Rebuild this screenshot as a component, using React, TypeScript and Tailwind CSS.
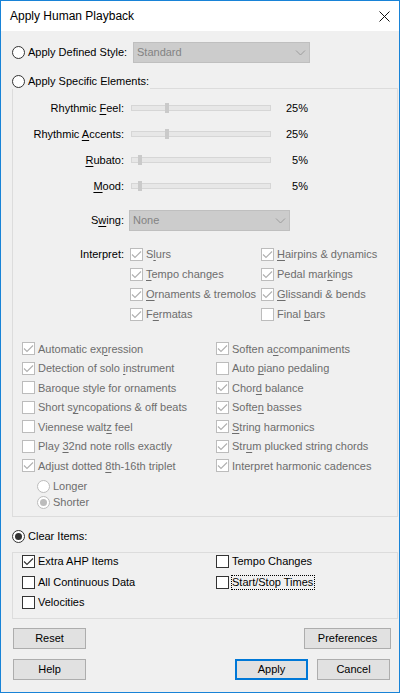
import type { ReactNode } from 'react';

// "_" marks the mnemonic letter, e.g. "Rhythmic _Feel:"
function Mn({ text }: { text: string }) {
  const i = text.indexOf('_');
  if (i < 0) return <>{text}</>;
  return (
    <>
      {text.slice(0, i)}
      <span className="underline underline-offset-[2px]">{text[i + 1]}</span>
      {text.slice(i + 2)}
    </>
  );
}

function CheckBox({ checked, disabled }: { checked?: boolean; disabled?: boolean }) {
  return (
    <div
      className={`w-[13px] h-[13px] shrink-0 bg-white border flex items-center justify-center ${
        disabled ? 'border-[#bcbcbc]' : 'border-[#333333]'
      }`}
    >
      {checked && (
        <svg width="11" height="11" viewBox="0 0 11 11" fill="none">
          <path
            d="M1 5.5 L4 8.5 L10 2.5"
            stroke={disabled ? '#b0b0b0' : '#333333'}
            strokeWidth="1.1"
          />
        </svg>
      )}
    </div>
  );
}

function Radio({ selected, disabled }: { selected?: boolean; disabled?: boolean }) {
  return (
    <div
      className={`w-[13px] h-[13px] shrink-0 rounded-full bg-white border flex items-center justify-center ${
        disabled ? 'border-[#bcbcbc]' : 'border-[#333333]'
      }`}
    >
      {selected && (
        <div className={`w-[7px] h-[7px] rounded-full ${disabled ? 'bg-[#bcbcbc]' : 'bg-[#333333]'}`} />
      )}
    </div>
  );
}

function CheckItem({
  label,
  checked,
  disabled,
  focus,
  h = 'h-[19.5px]',
}: {
  label: string;
  checked?: boolean;
  disabled?: boolean;
  focus?: boolean;
  h?: string;
}) {
  return (
    <div className={`flex items-center ${h} ${disabled ? 'text-[#6d6d6d]' : 'text-black'}`}>
      <CheckBox checked={checked} disabled={disabled} />
      {focus ? (
        <span className="ml-[2px] border border-dotted border-black leading-[13px] pr-[1px]">
          <Mn text={label} />
        </span>
      ) : (
        <span className="ml-[3px] whitespace-nowrap">
          <Mn text={label} />
        </span>
      )}
    </div>
  );
}

function Combo({ value, className }: { value: string; className: string }) {
  return (
    <div
      className={`h-[21px] bg-[#cccccc] border border-[#bfbfbf] flex items-center justify-between pl-[3px] pr-[3px] text-[#838383] ${className}`}
    >
      <span>{value}</span>
      <svg width="11" height="6" viewBox="0 0 11 6" fill="none">
        <path d="M1 0.5 L5.5 5 L10 0.5" stroke="#9c9c9c" strokeWidth="1" />
      </svg>
    </div>
  );
}

function SliderRow({ label, value, offset }: { label: string; value: string; offset: string }) {
  return (
    <div className="flex items-center h-[26px]">
      <div className="w-[111px] text-right whitespace-nowrap">
        <Mn text={label} />
      </div>
      <div className="ml-[7px] w-[140px] h-[6px] bg-[#e7e7e7] border border-[#d6d6d6] flex items-center">
        <div className={`${offset} w-[4px] h-[10px] bg-[#cacaca] shrink-0`} />
      </div>
      <div className="w-[37px] text-right">{value}</div>
    </div>
  );
}

function Button({ children, className, focused }: { children: ReactNode; className: string; focused?: boolean }) {
  return (
    <div
      className={`h-[21px] bg-[#e1e1e1] flex items-center justify-center ${
        focused ? 'border-2 border-[#0078d7]' : 'border border-[#adadad]'
      } ${className}`}
    >
      {children}
    </div>
  );
}

const lower: [string, boolean, string, boolean][] = [
  ['Automatic ex_pression', true, 'Soften a_ccompaniments', true],
  ['Detection of solo _instrument', true, 'Auto _piano pedaling', false],
  ['Baroque style for ornaments', false, 'Chor_d balance', true],
  ['Short s_yncopations & off beats', false, 'Softe_n basses', true],
  ['Viennese walt_z feel', false, '_String harmonics', true],
  ['Play _32nd note rolls exactly', false, 'Str_um plucked string chords', true],
  ['Adjust dotted _8th-16th triplet', true, 'Interpret harmonic cadences', true],
];

export default function App() {
  return (
    <div className="w-[400px] h-[693px] border border-[#1883d7] bg-[#f0f0f0] flex flex-col overflow-hidden text-[11px] text-black font-['Liberation_Sans',Arial,sans-serif]">
      {/* title bar */}
      <div className="h-[30px] shrink-0 bg-white flex items-center justify-between pl-[9px] pr-[9px]">
        <span className="text-[12px]">Apply Human Playback</span>
        <svg width="11" height="11" viewBox="0 0 11 11" fill="none">
          <path d="M0.5 0.5 L10.5 10.5 M10.5 0.5 L0.5 10.5" stroke="#111111" strokeWidth="1" />
        </svg>
      </div>

      <div className="flex-1 pl-[11px] pr-[1px] pt-[11px]">
        {/* defined style */}
        <div className="flex items-center h-[21px]">
          <div className="w-[121px] flex items-center">
            <Radio />
            <span className="ml-[3px] whitespace-nowrap">Apply Defined Style:</span>
          </div>
          <Combo value="Standard" className="w-[177px]" />
        </div>

        {/* specific elements group */}
        <div className="flex h-[16px] mt-[10px]">
          <div className="w-[138px] flex items-center">
            <Radio />
            <span className="ml-[3px] whitespace-nowrap">Apply Specific Elements:</span>
          </div>
          <div className="flex-1 flex flex-col justify-end">
            <div className="h-px bg-[#dcdcdc]" />
          </div>
        </div>
        <div className="border-x border-b border-[#dcdcdc] pt-[6px] pb-[6px]">
          <SliderRow label="Rhythmic _Feel:" value="25%" offset="ml-[33px]" />
          <SliderRow label="Rhythmic _Accents:" value="25%" offset="ml-[33px]" />
          <SliderRow label="_Rubato:" value="5%" offset="ml-[6px]" />
          <SliderRow label="_Mood:" value="5%" offset="ml-[6px]" />

          <div className="flex items-center h-[21px] mt-[11px]">
            <div className="w-[111px] text-right">
              <Mn text="S_wing:" />
            </div>
            <Combo value="None" className="ml-[5px] w-[161px]" />
          </div>

          <div className="flex mt-[13px]">
            <div className="w-[111px] text-right h-[20px] flex items-center justify-end">Interpret:</div>
            <div className="ml-[6px] grid grid-cols-[131px_auto]">
              <CheckItem label="S_lurs" checked disabled h="h-[20px]" />
              <CheckItem label="_Hairpins & dynamics" checked disabled h="h-[20px]" />
              <CheckItem label="_Tempo changes" checked disabled h="h-[20px]" />
              <CheckItem label="Pedal mar_kings" checked disabled h="h-[20px]" />
              <CheckItem label="_Ornaments & tremolos" checked disabled h="h-[20px]" />
              <CheckItem label="_Glissandi & bends" checked disabled h="h-[20px]" />
              <CheckItem label="F_ermatas" checked disabled h="h-[20px]" />
              <CheckItem label="Final _bars" disabled h="h-[20px]" />
            </div>
          </div>

          <div className="mt-[15px] pl-[9px] grid grid-cols-[194px_auto]">
            {lower.map(([l, lc, r, rc]) => (
              <div key={l} className="contents">
                <CheckItem label={l} checked={lc} disabled />
                <CheckItem label={r} checked={rc} disabled />
              </div>
            ))}
          </div>

          <div className="mt-[2.5px] pl-[24px] text-[#6d6d6d]">
            <div className="flex items-center h-[16px]">
              <Radio disabled />
              <span className="ml-[3px]">Longer</span>
            </div>
            <div className="flex items-center h-[16px]">
              <Radio selected disabled />
              <span className="ml-[3px]">Shorter</span>
            </div>
          </div>
        </div>

        {/* clear items */}
        <div className="flex items-center h-[16px] mt-[11px]">
          <Radio selected />
          <span className="ml-[3px]">Clear Items:</span>
        </div>
        <div className="mt-[8px] border border-[#dcdcdc] pl-[9px] pb-[7px] grid grid-cols-[194px_auto] gap-y-[3.5px]">
          <CheckItem label="Extra AHP Items" checked h="h-[17px]" />
          <CheckItem label="Tempo Changes" h="h-[17px]" />
          <CheckItem label="All Continuous Data" h="h-[17px]" />
          <CheckItem label="Start/Stop Times" focus h="h-[17px]" />
          <CheckItem label="Velocities" h="h-[17px]" />
        </div>

        {/* buttons */}
        <div className="flex justify-between mt-[9px] pl-[1px] pr-[7px]">
          <Button className="w-[73px]">Reset</Button>
          <Button className="w-[87px]">Preferences</Button>
        </div>
        <div className="flex mt-[10px] pl-[1px] pr-[8px]">
          <Button className="w-[73px]">Help</Button>
          <Button className="w-[73px] ml-auto" focused>
            Apply
          </Button>
          <Button className="w-[73px] ml-[9px]">Cancel</Button>
        </div>
      </div>
    </div>
  );
}
